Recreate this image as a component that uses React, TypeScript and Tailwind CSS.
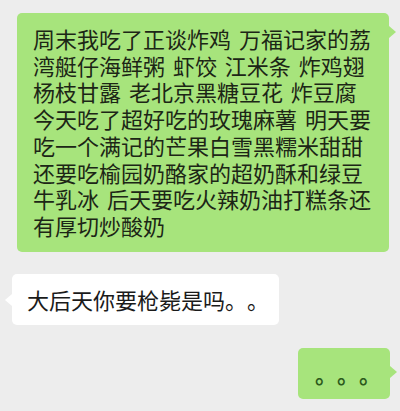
import React from 'react';

const font = { fontFamily: '"Noto Sans CJK SC", "Noto Sans", sans-serif' };

const lines = [
  '周末我吃了正谈炸鸡 万福记家的荔',
  '湾艇仔海鲜粥 虾饺 江米条 炸鸡翅',
  '杨枝甘露 老北京黑糖豆花 炸豆腐',
  '今天吃了超好吃的玫瑰麻薯 明天要',
  '吃一个满记的芒果白雪黑糯米甜甜',
  '还要吃榆园奶酪家的超奶酥和绿豆',
  '牛乳冰 后天要吃火辣奶油打糕条还',
  '有厚切炒酸奶',
];

const App: React.FC = () => {
  return (
    <div
      className="flex h-[411px] w-[400px] flex-col overflow-hidden bg-[#ededed] pt-[13px] [text-spacing-trim:space-all]"
      style={font}
    >
      {/* outgoing long message */}
      <div className="relative mr-[11px] w-[372px] self-end rounded-[5px] bg-[#a7e47c] pb-[13px] pl-[16px] pt-[12px]">
        {lines.map((l, i) => (
          <div
            key={i}
            className="whitespace-pre text-[22px] leading-[26.7px] text-[#1c2616] [word-spacing:3px]"
          >
            {l}
          </div>
        ))}
        <div className="absolute right-[-7px] top-[13px] h-0 w-0 border-y-[6px] border-l-[7px] border-y-transparent border-l-[#a7e47c]" />
      </div>

      {/* incoming reply */}
      <div className="relative ml-[12px] mt-[22px] flex h-[51px] items-center self-start rounded-[5px] bg-white pl-[15px] pr-[10px]">
        <span className="text-[22px] leading-[26px] text-[#1a1a1a]">大后天你要枪毙是吗。。</span>
        <div className="absolute left-[-7px] top-[20px] h-0 w-0 border-y-[6px] border-r-[7px] border-y-transparent border-r-white" />
      </div>

      {/* outgoing dots */}
      <div className="relative mr-[10px] mt-[23px] flex h-[51px] w-[92px] items-center self-end rounded-[5px] bg-[#a7e47c] pl-[17px]">
        <span className="text-[22px] font-bold leading-[26px] text-[#2c5a1c]">。。。</span>
        <div className="absolute right-[-7px] top-[18px] h-0 w-0 border-y-[6px] border-l-[7px] border-y-transparent border-l-[#a7e47c]" />
      </div>
    </div>
  );
};

export default App;
